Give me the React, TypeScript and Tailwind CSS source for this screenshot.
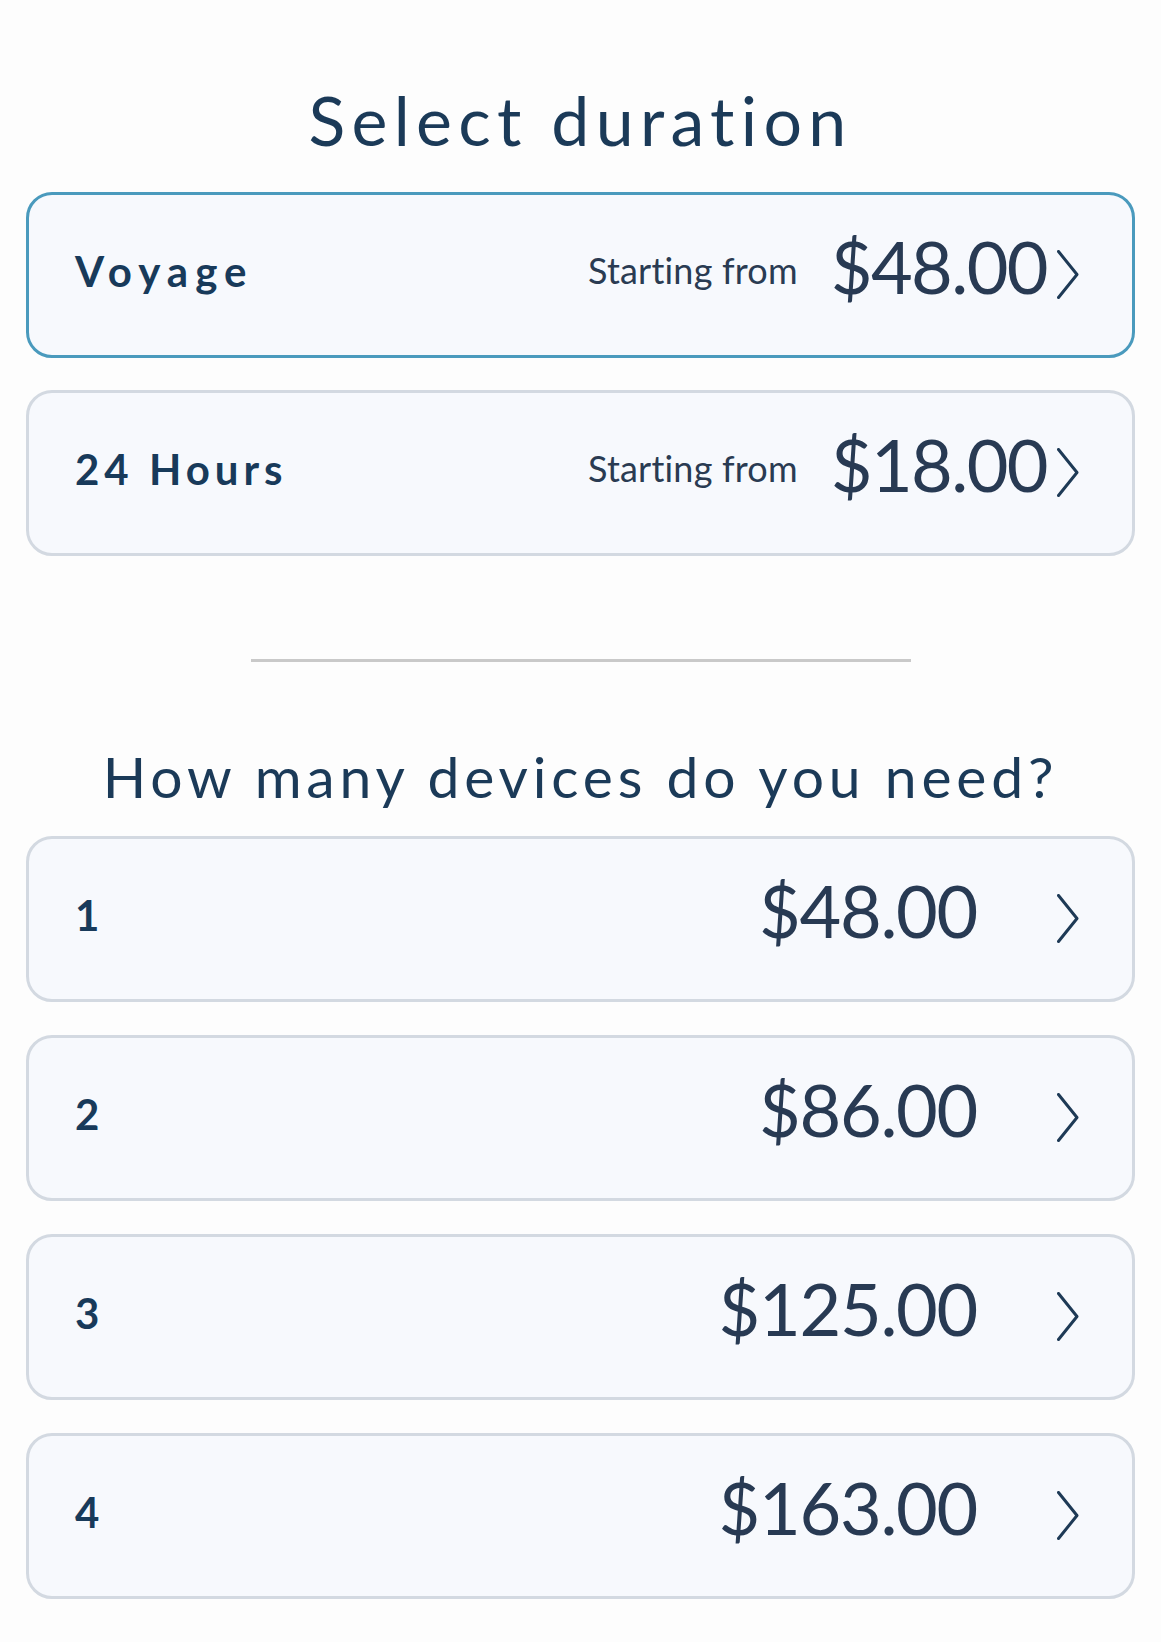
import React from "react";

const Chevron = () => (
  <svg width="22" height="50" viewBox="0 0 22 50" className="shrink-0">
    <path d="M1.5 1.5 L20 24.5 L1.5 47.5" fill="none" stroke="#1e3a56" strokeWidth="3" strokeLinecap="round" strokeLinejoin="round" />
  </svg>
);

const font = { fontFamily: "Lato, 'Noto Sans', sans-serif" };

function DurationCard({ label, price, active, wide }: { label: string; price: string; active?: boolean; wide?: boolean }) {
  return (
    <div
      className={`flex h-[166px] items-center rounded-[26px] border-[3px] bg-[#f7f9fd] pl-[46px] pr-[53px] ${
        active ? "border-[#4a9abd]" : "border-[#d3d9e1]"
      }`}
    >
      <span
        className={`mb-[8px] text-[42px] font-bold leading-none text-[#183a5a] ${
          wide ? "tracking-[7px]" : "tracking-[5px]"
        }`}
      >
        {label}
      </span>
      <div className="flex-1" />
      <span className="mb-[11px] text-[36px] leading-none tracking-[0.2px] text-[#2a3b52]">Starting from</span>
      <span className="mb-[19px] ml-[33px] text-[72px] leading-none tracking-[-1.6px] text-[#283a53]">{price}</span>
      <div className="ml-[10px]">
        <Chevron />
      </div>
    </div>
  );
}

function DeviceCard({ label, price }: { label: string; price: string }) {
  return (
    <div className="flex h-[166px] items-center rounded-[26px] border-[3px] border-[#d3d9e1] bg-[#f7f9fd] pl-[46px] pr-[53px]">
      <span className="mb-[8px] text-[42px] font-bold leading-none text-[#183a5a]">{label}</span>
      <div className="flex-1" />
      <span className="mb-[19px] text-[72px] leading-none tracking-[-1.3px] text-[#283a53]">{price}</span>
      <div className="ml-[80px]">
        <Chevron />
      </div>
    </div>
  );
}

export default function App() {
  return (
    <div
      className="min-h-screen bg-[#fdfdfd] px-[26px] pb-[46px] pt-[79px] [font-variant-ligatures:none]"
      style={font}
    >
      <h1 className="text-center text-[68px] font-normal leading-[82px] tracking-[6.3px] text-[#1b3a58]">
        Select duration
      </h1>
      <div className="mt-[31px] flex flex-col gap-[32px]">
        <DurationCard label="Voyage" price="$48.00" active wide />
        <DurationCard label="24 Hours" price="$18.00" />
      </div>
      <div className="mx-auto mt-[103px] h-[3px] w-[660px] bg-[#c9c9c9]" />
      <h2 className="mt-[80px] text-center text-[57px] font-normal leading-[68px] tracking-[4.8px] text-[#1b3a58]">
        How many devices do you need?
      </h2>
      <div className="mt-[26px] flex flex-col gap-[33px]">
        <DeviceCard label="1" price="$48.00" />
        <DeviceCard label="2" price="$86.00" />
        <DeviceCard label="3" price="$125.00" />
        <DeviceCard label="4" price="$163.00" />
      </div>
    </div>
  );
}
